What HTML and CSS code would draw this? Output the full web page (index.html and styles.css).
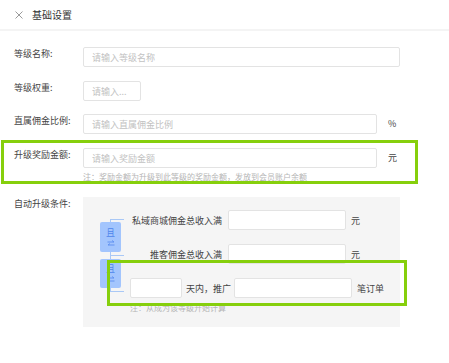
FILE: index.html
```html
<!DOCTYPE html>
<html lang="zh-CN">
<head>
    <meta charset="UTF-8">
    <title>基础设置</title>
    <link rel="stylesheet" href="styles.css">
</head>
<body>

    <div class="page">
        <div class="header">
            <svg class="close-icon" width="8" height="8" viewBox="0 0 8 8">
                <path d="M0.5 0.5 L7.5 7.5 M7.5 0.5 L0.5 7.5" stroke="#9a9a9a" stroke-width="1" fill="none"/>
            </svg>
            <span class="title">基础设置</span>
        </div>

        <div class="form">
            <div class="row">
                <label class="label">等级名称:</label>
                <input class="input input-long" placeholder="请输入等级名称">
            </div>
            <div class="row row-tight">
                <label class="label">等级权重:</label>
                <input class="input input-short" placeholder="请输入...">
            </div>
            <div class="row">
                <label class="label">直属佣金比例:</label>
                <input class="input input-mid" placeholder="请输入直属佣金比例">
                <span class="unit">%</span>
            </div>
            <div class="row row-note">
                <label class="label">升级奖励金额:</label>
                <div class="field">
                    <div class="field-line">
                        <input class="input input-mid" placeholder="请输入奖励金额">
                        <span class="unit">元</span>
                    </div>
                    <p class="note">注：奖励金额为升级到此等级的奖励金额，发放到会员账户余额</p>
                </div>
            </div>

            <!-- Auto upgrade conditions -->
            <div class="row">
                <label class="label label-top">自动升级条件:</label>
                <div class="cond-box">
                    <div class="bracket">
                        <div class="tick tick-1"></div>
                        <div class="tick tick-2"></div>
                        <div class="tick tick-3"></div>
                        <div class="badge badge-1">
                            <span>且</span>
                            <svg width="8" height="7" viewBox="0 0 8 7">
                                <path d="M0.5 2 H7 M5 0.5 L7 2 M7.5 5 H1 M3 3.5 L1 5" stroke="#5b8def" stroke-width="0.9" fill="none"/>
                            </svg>
                        </div>
                        <div class="badge badge-2">
                            <span>且</span>
                            <svg width="8" height="7" viewBox="0 0 8 7">
                                <path d="M0.5 2 H7 M5 0.5 L7 2 M7.5 5 H1 M3 3.5 L1 5" stroke="#5b8def" stroke-width="0.9" fill="none"/>
                            </svg>
                        </div>
                    </div>

                    <div class="cond-row">
                        <span class="cond-label">私域商城佣金总收入满</span>
                        <input class="input input-cond">
                        <span class="cond-unit">元</span>
                    </div>
                    <div class="cond-row">
                        <span class="cond-label">推客佣金总收入满</span>
                        <input class="input input-cond">
                        <span class="cond-unit">元</span>
                    </div>
                    <div class="cond-row">
                        <input class="input input-days">
                        <span class="cond-text">天内，推广</span>
                        <input class="input input-orders">
                        <span class="cond-unit">笔订单</span>
                    </div>
                    <p class="note note-cond">注：从成为该等级开始计算</p>
                </div>
            </div>
        </div>

        <!-- highlight frames -->
        <div class="frame frame-reward"></div>
        <div class="frame frame-orders"></div>
    </div>

</body>
</html>
```

FILE: styles.css
```css
body {
    margin: 0;
    background: #ffffff;
    font-family: "Noto Sans CJK SC", "Noto Sans", sans-serif;
    color: #444;
}

.page {
    position: relative;
    width: 449px;
    height: 363px;
    overflow: hidden;
}

.header {
    display: flex;
    align-items: center;
    height: 29px;
    padding-left: 15px;
    border-bottom: 2px solid #f4f4f4;
}

.close-icon {
    margin-right: 9px;
}

.title {
    font-size: 10px;
    color: #333;
}

.form {
    padding-top: 16px;
}

.row {
    display: flex;
    align-items: flex-start;
    margin-bottom: 14px;
}

.row-tight {
    margin-bottom: 13px;
}

.label {
    width: 69px;
    padding-left: 14px;
    font-size: 9px;
    line-height: 14px;
    color: #444;
    flex-shrink: 0;
}

.label-top {
    margin-top: 1px;
}

.input {
    box-sizing: border-box;
    height: 20px;
    border: 1px solid #e3e3e3;
    border-radius: 2px;
    background: #fff;
    padding: 0 8px;
    font-family: inherit;
    font-size: 9px;
    color: #333;
    outline: none;
}

.input::placeholder {
    color: #c2c2c2;
}

.input-long {
    width: 317px;
}

.input-short {
    width: 58px;
}

.input-mid {
    width: 294px;
}

.unit {
    font-size: 9px;
    line-height: 20px;
    margin-left: 11px;
    color: #444;
}

.field-line {
    display: flex;
}

.note {
    margin: 4px 0 0;
    font-size: 8px;
    line-height: 10px;
    color: #b5b5b5;
}

/* Condition box */
.cond-box {
    position: relative;
    box-sizing: border-box;
    width: 317px;
    height: 130px;
    margin-top: 1px;
    background: #f5f5f5;
    padding: 13px 0 0 47px;
}

.cond-row {
    display: flex;
    align-items: center;
    margin-bottom: 14px;
    font-size: 9px;
    color: #444;
}

.cond-row:nth-child(4) {
    margin-bottom: 0;
}

.cond-label {
    width: 92px;
    margin-right: 6px;
    text-align: right;
}

.input-cond {
    width: 118px;
}

.input-days {
    width: 52px;
}

.input-orders {
    width: 118px;
    margin-left: 3px;
}

.cond-text {
    margin-left: 4px;
}

.cond-unit {
    margin-left: 5px;
}

.note-cond {
    margin-top: 5px;
}

.bracket {
    position: absolute;
    left: 17px;
    top: 22px;
    width: 30px;
    height: 74px;
}

.bracket::before {
    content: "";
    position: absolute;
    left: 10px;
    top: 0;
    width: 1px;
    height: 73px;
    background: #a9c8f6;
}

.tick {
    position: absolute;
    left: 10px;
    width: 14px;
    height: 1px;
    background: #a9c8f6;
}

.tick-1 { top: 0; }
.tick-2 { top: 36px; }
.tick-3 { top: 72px; }

.badge {
    position: absolute;
    left: 0;
    width: 21px;
    height: 30px;
    background: #a3c5fd;
    border-radius: 2px;
    display: flex;
    flex-direction: column;
    align-items: center;
    justify-content: center;
    gap: 2px;
    font-size: 9px;
    line-height: 10px;
    color: #4f86ec;
}

.badge-1 { top: 3px; }
.badge-2 { top: 40px; height: 29px; }

/* Highlight frames */
.frame {
    position: absolute;
    box-sizing: border-box;
    border: 3px solid #86cf0c;
}

.frame-reward {
    left: 1px;
    top: 140px;
    width: 417px;
    height: 44px;
}

.frame-orders {
    left: 107px;
    top: 260px;
    width: 300px;
    height: 46px;
}
```
